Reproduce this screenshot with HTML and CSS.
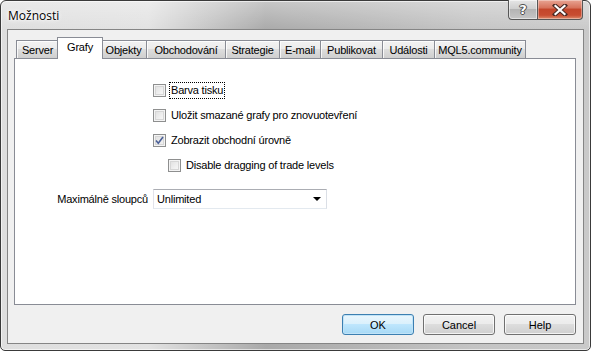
FILE: index.html
```html
<!DOCTYPE html>
<html lang="cs">
<head>
    <meta charset="UTF-8">
    <title>Možnosti</title>
    <link rel="stylesheet" href="styles.css">
</head>
<body>

    <!-- Dialog window -->
    <div class="window">
        <!-- Title bar -->
        <div class="titlebar">
            <span class="title">Možnosti</span>
            <div class="caption-buttons">
                <div class="cap-btn help-btn"><span>?</span></div>
                <div class="cap-btn close-btn">
                    <svg width="16" height="12" viewBox="0 0 16 12">
                        <path d="M3 1.5 L13 10.5 M13 1.5 L3 10.5" stroke="#4b2a24" stroke-width="4.2" stroke-linecap="square"/>
                        <path d="M3.5 2 L12.5 10 M12.5 2 L3.5 10" stroke="#fff" stroke-width="2.2" stroke-linecap="square"/>
                    </svg>
                </div>
            </div>
        </div>

        <!-- Client area -->
        <div class="client">
            <div class="tabs">
                <div class="tab" style="width: 43px">Server</div>
                <div class="tab active" style="width: 46px">Grafy</div>
                <div class="tab" style="width: 47px">Objekty</div>
                <div class="tab" style="width: 80px">Obchodování</div>
                <div class="tab" style="width: 55px">Strategie</div>
                <div class="tab" style="width: 42px">E-mail</div>
                <div class="tab" style="width: 63px">Publikovat</div>
                <div class="tab" style="width: 53px">Události</div>
                <div class="tab" style="width: 92px">MQL5.community</div>
            </div>

            <div class="panel">
                <div class="options">
                    <label class="check">
                        <span class="box"></span>
                        <span class="label focus">Barva tisku</span>
                    </label>
                    <label class="check">
                        <span class="box"></span>
                        <span class="label">Uložit smazané grafy pro znovuotevření</span>
                    </label>
                    <label class="check">
                        <span class="box checked">
                            <svg width="9" height="9" viewBox="0 0 9 9">
                                <path d="M1 4.5 L3.3 7.2 L8 1" fill="none" stroke="#4a5f97" stroke-width="1.6"/>
                            </svg>
                        </span>
                        <span class="label">Zobrazit obchodní úrovně</span>
                    </label>
                    <label class="check sub">
                        <span class="box"></span>
                        <span class="label">Disable dragging of trade levels</span>
                    </label>
                </div>

                <div class="field">
                    <span class="field-label">Maximálně sloupců</span>
                    <div class="combo">
                        <span>Unlimited</span>
                        <span class="arrow"></span>
                    </div>
                </div>
            </div>

            <div class="buttons">
                <button class="btn default">OK</button>
                <button class="btn">Cancel</button>
                <button class="btn">Help</button>
            </div>
        </div>
    </div>

</body>
</html>
```

FILE: styles.css
```css
/* Basic Reset */
* {
    margin: 0;
    padding: 0;
    box-sizing: border-box;
}
body {
    font-family: 'Liberation Sans', Arial, sans-serif;
    font-size: 11px;
    letter-spacing: -0.2px;
    color: #000;
    background: #fff;
    width: 591px;
    height: 351px;
    overflow: hidden;
}

/* Window frame */
.window {
    width: 591px;
    height: 351px;
    border: 1px solid #3a3a3a;
    border-radius: 6px 6px 5px 5px;
    background:
        linear-gradient(to bottom, rgba(255,255,255,0.35), rgba(255,255,255,0) 30px),
        linear-gradient(to right, #dedede 0%, #e2e2e2 25%, #a9a9a9 45%, #b4b4b4 60%, #c4c4c4 80%, #c9c9c9 100%);
    box-shadow: inset 0 0 0 1px rgba(255, 255, 255, 0.6);
    display: flex;
    flex-direction: column;
    padding: 0 6px 6px 6px;
}

/* Title bar */
.titlebar {
    height: 28px;
    display: flex;
    justify-content: space-between;
    align-items: flex-start;
}
.title {
    font-family: 'Open Sans', 'Liberation Sans', sans-serif;
    font-size: 12px;
    letter-spacing: 0;
    margin-top: 6px;
    margin-left: 1px;
    text-shadow: 0 0 6px #fff, 0 0 4px #fff, 0 0 2px #fff;
}
.caption-buttons {
    display: flex;
    margin-top: -1px;
    margin-right: 1px;
}
.cap-btn {
    height: 20px;
    border: 1px solid #575757;
    border-top: none;
    display: flex;
    align-items: center;
    justify-content: center;
}
.help-btn {
    width: 29px;
    border-right: none;
    border-radius: 0 0 0 4px;
    background: linear-gradient(to bottom, #e6e6e6 0%, #cfcfcf 45%, #b4b4b4 50%, #c6c6c6 100%);
    box-shadow: inset 0 0 0 1px rgba(255, 255, 255, 0.5);
}
.help-btn span {
    font-family: 'DejaVu Sans', sans-serif;
    font-weight: bold;
    font-size: 13px;
    color: #fff;
    text-shadow: 0 0 1px #333, 1px 0 0 #555, -1px 0 0 #555, 0 1px 0 #555, 0 -1px 0 #555;
}
.close-btn {
    width: 46px;
    border-radius: 0 0 4px 0;
    background: linear-gradient(to bottom, #e8a493 0%, #d7745d 40%, #c4462b 50%, #c84d31 80%, #de8c6c 100%);
    box-shadow: inset 0 0 0 1px rgba(255, 255, 255, 0.35);
}

/* Client area */
.client {
    flex: 1;
    background: #f0f0f0;
    border: 1px solid #858585;
    padding: 7px 7px 8px 6px;
    display: flex;
    flex-direction: column;
}

/* Tabs */
.tabs {
    display: flex;
    align-items: flex-end;
    height: 21px;
    padding-left: 2px;
    position: relative;
    z-index: 1;
}
.tab {
    height: 18px;
    margin-left: -1px;
    border: 1px solid #898c95;
    border-bottom: none;
    background: linear-gradient(to bottom, #f2f2f2 0%, #ebebeb 50%, #dddddd 50%, #cfcfcf 100%);
    box-shadow: inset 1px 1px 0 rgba(255, 255, 255, 0.8);
    display: flex;
    align-items: center;
    justify-content: center;
    padding-top: 1px;
    white-space: nowrap;
}
.tab:first-child {
    margin-left: 0;
}
.tab.active {
    height: 22px;
    margin: 0 -2px -1px -2px;
    background: #fff;
    box-shadow: none;
    padding-bottom: 4px;
    position: relative;
    z-index: 2;
}

/* Tab panel */
.panel {
    height: 247px;
    background: #fff;
    border: 1px solid #898c95;
    padding: 25px 0 0 138px;
}
.options {
    display: flex;
    flex-direction: column;
    gap: 12px;
}
.check {
    display: flex;
    align-items: center;
    height: 13px;
}
.check.sub {
    padding-left: 15px;
}
.box {
    width: 13px;
    height: 13px;
    border: 1px solid #8e8f8f;
    background: linear-gradient(135deg, #dcdcdc 0%, #f0f0f0 60%, #fbfbfb 100%);
    box-shadow: inset 0 0 0 1px #f4f4f4, inset 0 0 0 2px #d6d6d6;
    display: flex;
    align-items: center;
    justify-content: center;
    margin-right: 4px;
}
.box.checked {
    background: linear-gradient(135deg, #e0e0e0 0%, #f4f4f4 100%);
}
.label {
    padding: 1px 1px;
    line-height: 13px;
    white-space: nowrap;
}
.label.focus {
    outline: 1px dotted #000;
    outline-offset: 0;
}

/* Combo field */
.field {
    display: flex;
    align-items: center;
    margin-top: 17px;
    margin-left: -97px;
}
.field-label {
    width: 92px;
    text-align: right;
    margin-right: 5px;
    white-space: nowrap;
}
.combo {
    width: 174px;
    height: 20px;
    border: 1px solid #abadb3;
    border-color: #abadb3 #dbdfe6 #e3e9ef #e2e3ea;
    background: #fff;
    display: flex;
    align-items: center;
    justify-content: space-between;
    padding: 0 5px 0 3px;
}
.arrow {
    width: 0;
    height: 0;
    border-left: 4px solid transparent;
    border-right: 4px solid transparent;
    border-top: 4px solid #000;
}

/* Dialog buttons */
.buttons {
    display: flex;
    justify-content: flex-end;
    gap: 9px;
    margin-top: 9px;
}
.btn {
    width: 72px;
    height: 21px;
    font-family: 'Liberation Sans', Arial, sans-serif;
    font-size: 11px;
    color: #000;
    border: 1px solid #707070;
    border-radius: 3px;
    background: linear-gradient(to bottom, #f2f2f2 0%, #ebebeb 50%, #dddddd 50%, #cfcfcf 100%);
    box-shadow: inset 0 0 0 1px rgba(255, 255, 255, 0.75);
}
.btn.default {
    border-color: #3c7fb1;
    background: linear-gradient(to bottom, #eaf6fd 0%, #d9f0fc 50%, #bee6fd 50%, #a7d9f5 100%);
    box-shadow: inset 0 0 0 1px #c1e3f7;
}
```
